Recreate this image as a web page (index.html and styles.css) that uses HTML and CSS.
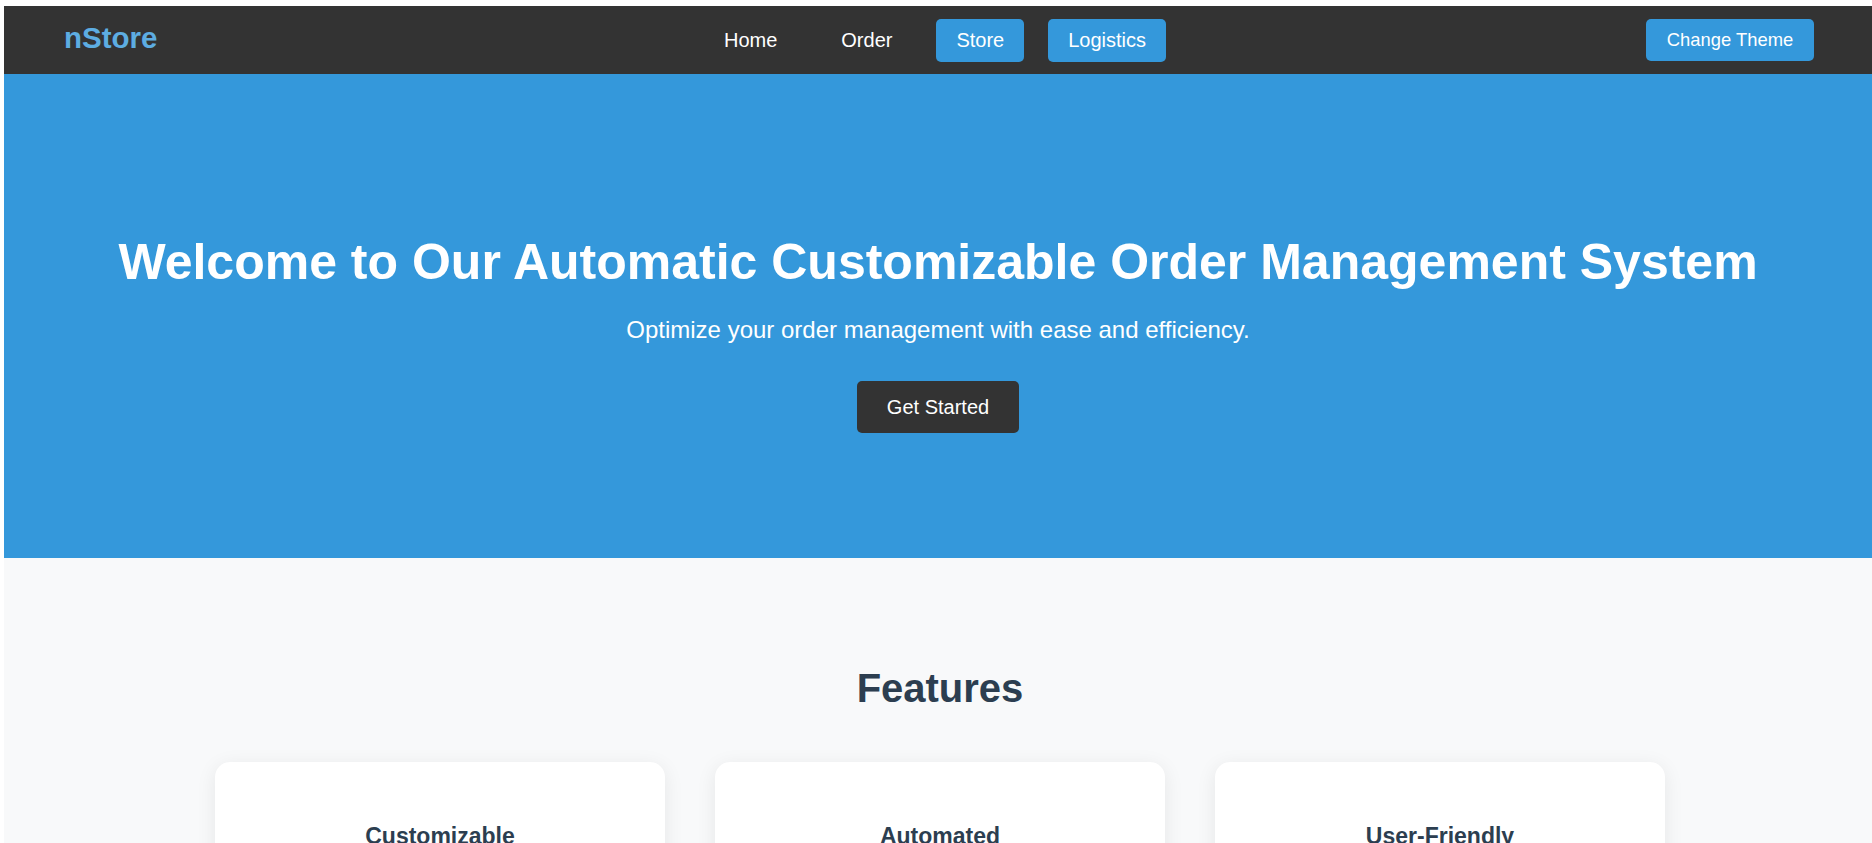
FILE: index.html
```html
<!DOCTYPE html>
<html lang="en">
<head>
<meta charset="UTF-8">
<title>nStore - Order Management</title>
<link rel="stylesheet" href="styles.css">
</head>
<body>
<header class="navbar">
  <div class="logo">nStore</div>
  <nav class="nav-links">
    <a class="nav-link" href="#">Home</a>
    <a class="nav-link" href="#">Order</a>
    <a class="nav-link nav-btn" href="#">Store</a>
    <a class="nav-link nav-btn" href="#">Logistics</a>
  </nav>
  <button class="theme-btn">Change Theme</button>
</header>

<section class="hero">
  <h1 class="hero-title">Welcome to Our Automatic Customizable Order Management System</h1>
  <p class="hero-sub">Optimize your order management with ease and efficiency.</p>
  <button class="cta-btn">Get Started</button>
</section>

<section class="features">
  <h2 class="features-title">Features</h2>
  <div class="cards">
    <div class="card">
      <h3 class="card-title">Customizable</h3>
      <p class="card-text">Tailor the system to fit your business needs.</p>
    </div>
    <div class="card">
      <h3 class="card-title">Automated</h3>
      <p class="card-text">Automate repetitive tasks and save time.</p>
    </div>
    <div class="card">
      <h3 class="card-title">User-Friendly</h3>
      <p class="card-text">Intuitive interface for everyone on your team.</p>
    </div>
  </div>
</section>
</body>
</html>
```

FILE: styles.css
```css
* {
  box-sizing: border-box;
}

html {
  background: #ffffff;
}

body {
  margin: 6px 0 0 4px;
  font-family: "Liberation Sans", Arial, sans-serif;
  background: #f8f9fa;
  color: #333;
}

.navbar {
  height: 68px;
  background: #333333;
  display: flex;
  align-items: center;
  justify-content: space-between;
  padding: 0 58px 0 60px;
}

.logo {
  font-size: 29.5px;
  font-weight: bold;
  color: #5dade2;
  width: 168px;
  margin-top: -4px;
}

.nav-links {
  display: flex;
  gap: 24px;
  align-items: center;
  margin-right: 8px;
}

.nav-link {
  color: #ffffff;
  text-decoration: none;
  font-size: 20px;
  padding: 10px 20px;
  border-radius: 5px;
  line-height: 23px;
}

.nav-btn {
  background: #3498db;
}

.theme-btn {
  font-family: inherit;
  background: #3498db;
  color: #ffffff;
  border: none;
  border-radius: 5px;
  font-size: 18.4px;
  padding: 10px 20px;
  line-height: 22px;
  width: 168px;
}

.hero {
  background: #3498db;
  color: #ffffff;
  text-align: center;
  padding: 160px 20px 125px;
}

.hero-title {
  margin: 0 0 26px;
  font-size: 50px;
  line-height: 56px;
  font-weight: bold;
}

.hero-sub {
  margin: 0 0 37px;
  font-size: 24px;
  line-height: 28px;
}

.cta-btn {
  font-family: inherit;
  background: #333333;
  color: #ffffff;
  border: none;
  border-radius: 5px;
  font-size: 20px;
  line-height: 22px;
  padding: 15px 30px;
}

.features {
  padding: 107px 18px 80px 22px;
  text-align: center;
}

.features-title {
  margin: 0 0 51px;
  font-size: 40px;
  line-height: 46px;
  color: #2c3e50;
}

.cards {
  display: flex;
  justify-content: center;
  gap: 50px;
}

.card {
  width: 450px;
  background: #ffffff;
  border-radius: 15px;
  padding: 40px 30px;
  box-shadow: 0 4px 20px rgba(0, 0, 0, 0.08);
}

.card-title {
  margin: 21px 0 16px;
  font-size: 23px;
  color: #2c3e50;
}

.card-text {
  margin: 0;
  font-size: 17px;
  color: #555;
}
```
